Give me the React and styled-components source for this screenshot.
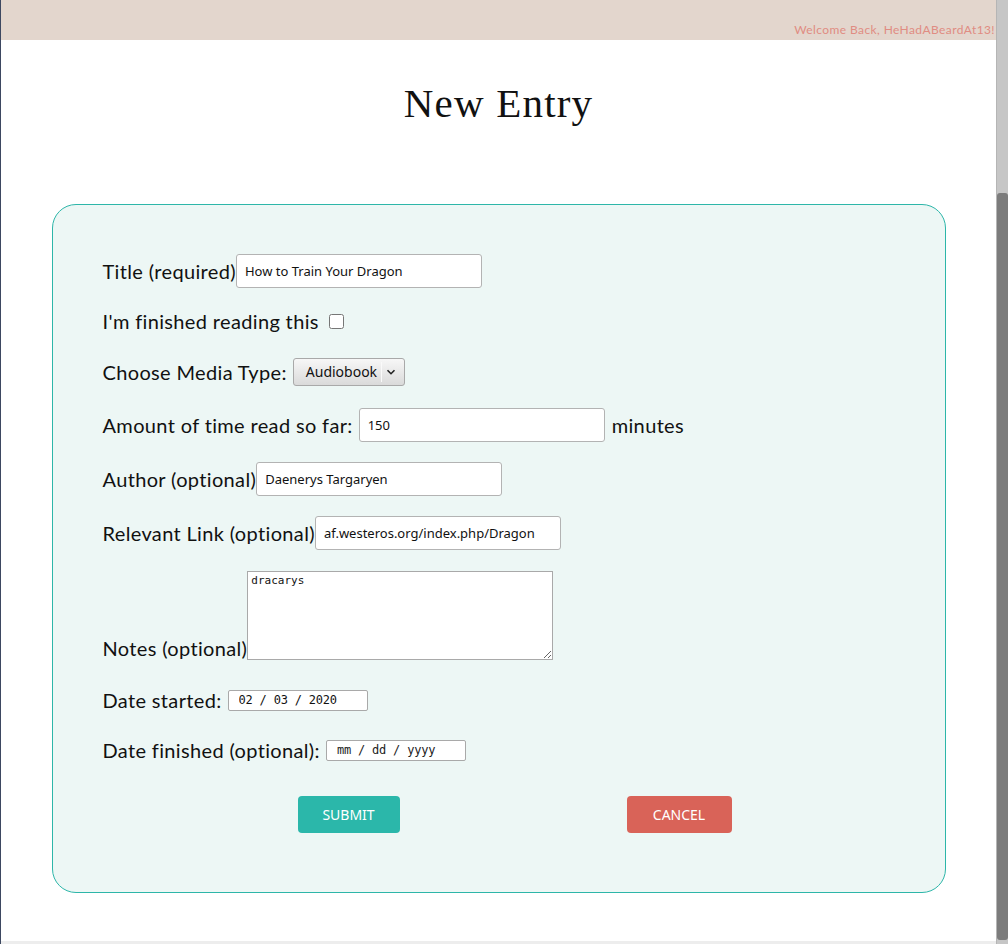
import React from 'react';
import styled, { createGlobalStyle } from 'styled-components';

const GlobalStyle = createGlobalStyle`
  html, body {
    margin: 0;
    padding: 0;
    overflow: hidden;
    background: #fff;
  }
  * {
    box-sizing: border-box;
  }
`;

const Window = styled.div`
  display: flex;
  width: 1008px;
  height: 944px;
  background: #fff;
`;

const LeftEdge = styled.div`
  width: 1px;
  background: #3d4861;
`;

const Page = styled.div`
  flex: 1;
  display: flex;
  flex-direction: column;
  overflow: hidden;
  border-bottom: 3px solid #ededed;
`;

const Header = styled.header`
  height: 40px;
  flex-shrink: 0;
  background: #e3d6cd;
  display: flex;
  justify-content: flex-end;
  align-items: flex-end;
  padding-bottom: 3px;
  padding-right: 1px;
  overflow: hidden;
  white-space: nowrap;
`;

const Welcome = styled.span`
  font-family: Lato, 'Noto Sans', sans-serif;
  font-size: 12px;
  letter-spacing: 0.4px;
  color: #e08c82;
`;

const Heading = styled.h1`
  margin: 43px 0 0;
  text-align: center;
  font-family: 'Liberation Serif', serif;
  font-weight: 400;
  font-size: 41px;
  line-height: 41px;
  letter-spacing: 1.2px;
  color: #111;
`;

const Card = styled.form`
  width: 894px;
  margin: 80px auto 0;
  padding: 49px 50px 59px;
  background: #edf7f5;
  border: 1px solid #2db6a9;
  border-radius: 24px;
  display: flex;
  flex-direction: column;
`;

const Row = styled.div`
  display: flex;
  align-items: ${(props) => props.align || 'center'};
  min-height: 34px;
  margin-top: ${(props) => props.mt || 0}px;
  font-family: Lato, 'Noto Sans', sans-serif;
  font-size: 20px;
  letter-spacing: 0.35px;
  color: #111;
`;

const Label = styled.label`
  line-height: 24px;
  white-space: nowrap;
  margin-right: ${(props) => props.gap || 0}px;
`;

const TextInput = styled.input`
  width: 246px;
  height: 34px;
  padding: 0 8px;
  border: 1px solid #b3b3b3;
  border-radius: 3px;
  background: #fff;
  font-family: 'Noto Sans', sans-serif;
  font-size: 13px;
  letter-spacing: 0;
  color: #111;
  outline: none;
`;

const Suffix = styled.span`
  margin-left: 7px;
`;

const Check = styled.input`
  width: 15px;
  height: 15px;
  margin: 0 0 0 10px;
  accent-color: #2db6a9;
`;

const Select = styled.div`
  display: flex;
  align-items: center;
  width: 112px;
  height: 28px;
  padding: 0 0 0 12px;
  border: 1px solid #a9a9a9;
  border-radius: 3px;
  background: linear-gradient(#f7f7f7, #dadada);
  font-family: 'Noto Sans', sans-serif;
  font-size: 14px;
  letter-spacing: 0;
  color: #111;
`;

const SelectText = styled.span`
  flex: 1;
  border-right: 1px solid #fafafa;
  line-height: 20px;
`;

const Chevron = styled.svg`
  width: 10px;
  height: 10px;
  margin: 0 8px 0 4px;
`;

const Notes = styled.textarea`
  width: 306px;
  height: 89px;
  padding: 2px 3px;
  border: 1px solid #a9a9a9;
  background: #fff;
  font-family: 'DejaVu Sans Mono', monospace;
  font-size: 11px;
  letter-spacing: 0;
  color: #111;
  outline: none;
`;

const DateInput = styled.input`
  width: ${(props) => props.w}px;
  height: 21px;
  padding: 0 10px;
  border: 1px solid #a9a9a9;
  border-radius: 2px;
  background: #fff;
  font-family: 'DejaVu Sans Mono', monospace;
  font-size: 12px;
  letter-spacing: -0.2px;
  color: #111;
  outline: none;

  &::placeholder {
    color: #222;
    opacity: 1;
  }
`;

const Actions = styled.div`
  display: flex;
  justify-content: center;
  gap: 227px;
  padding-left: 32px;
  margin-top: 29px;
`;

const Button = styled.button`
  width: ${(props) => props.w}px;
  height: 37px;
  border: none;
  border-radius: 4px;
  background: ${(props) => props.bg};
  color: #fff;
  font-family: 'Noto Sans', sans-serif;
  font-size: 14px;
  text-transform: uppercase;
  cursor: pointer;
`;

const Scrollbar = styled.div`
  width: 12px;
  background: #c6c6c6;
  border-left: 1px solid #b5b5b5;
  display: flex;
  justify-content: center;
`;

const Thumb = styled.div`
  width: 6px;
  margin-top: 193px;
  margin-bottom: 4px;
  flex: 1;
  border-radius: 3px;
  background: #7c7c7c;
`;

export default function App() {
  return (
    <>
      <GlobalStyle />
      <Window>
        <LeftEdge />
        <Page>
          <Header>
            <Welcome>Welcome Back, HeHadABeardAt13!</Welcome>
          </Header>
          <Heading>New Entry</Heading>
          <Card onSubmit={(e) => e.preventDefault()}>
            <Row>
              <Label>Title (required)</Label>
              <TextInput defaultValue="How to Train Your Dragon" />
            </Row>
            <Row mt={16}>
              <Label>I'm finished reading this</Label>
              <Check type="checkbox" />
            </Row>
            <Row mt={17}>
              <Label gap={6}>Choose Media Type:</Label>
              <Select>
                <SelectText>Audiobook</SelectText>
                <Chevron viewBox="0 0 10 10">
                  <path d="M1.5 3.2 L5 6.7 L8.5 3.2" fill="none" stroke="#222" strokeWidth="1.6" />
                </Chevron>
              </Select>
            </Row>
            <Row mt={19}>
              <Label gap={6}>Amount of time read so far:</Label>
              <TextInput defaultValue="150" />
              <Suffix>minutes</Suffix>
            </Row>
            <Row mt={20}>
              <Label>Author (optional)</Label>
              <TextInput defaultValue="Daenerys Targaryen" />
            </Row>
            <Row mt={20}>
              <Label>Relevant Link (optional)</Label>
              <TextInput defaultValue="af.westeros.org/index.php/Dragon" />
            </Row>
            <Row mt={21} align="flex-end">
              <Label>Notes (optional)</Label>
              <Notes defaultValue="dracarys" />
            </Row>
            <Row mt={23}>
              <Label gap={6}>Date started:</Label>
              <DateInput w={140} defaultValue="02 / 03 / 2020" />
            </Row>
            <Row mt={16}>
              <Label gap={6}>Date finished (optional):</Label>
              <DateInput w={140} placeholder="mm / dd / yyyy" />
            </Row>
            <Actions>
              <Button type="submit" w={102} bg="#2bb7aa">Submit</Button>
              <Button type="button" w={105} bg="#d96358">Cancel</Button>
            </Actions>
          </Card>
        </Page>
        <Scrollbar>
          <Thumb />
        </Scrollbar>
      </Window>
    </>
  );
}
